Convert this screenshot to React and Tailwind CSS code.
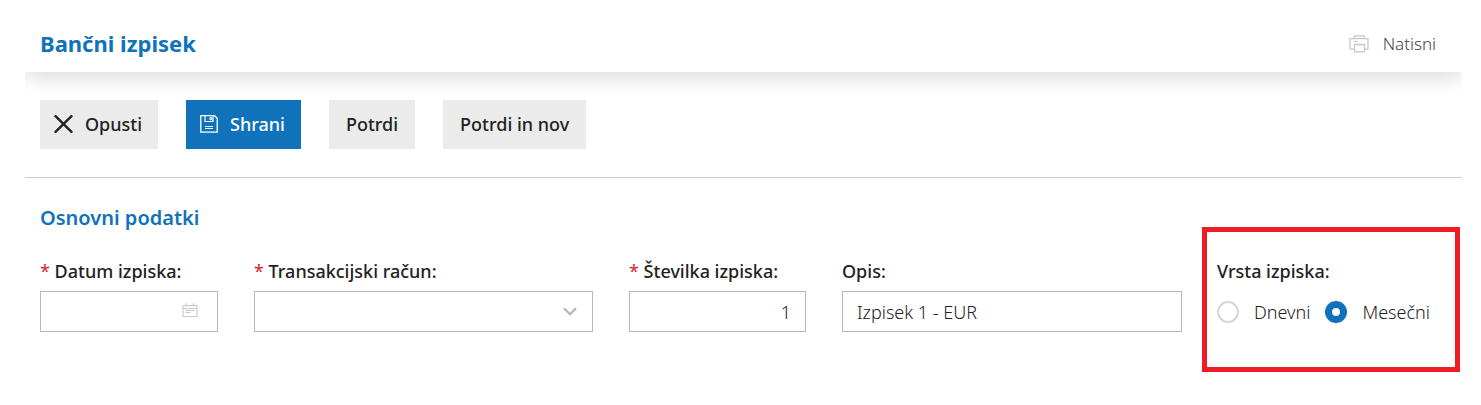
import { useState } from "react";

function CloseIcon() {
  return (
    <svg width="19" height="18" viewBox="0 0 19 18" fill="none" stroke="#222" strokeWidth="2.4" strokeLinecap="round" aria-hidden="true">
      <path d="M1.5 1.2 17.5 16.8M17.5 1.2 1.5 16.8" />
    </svg>
  );
}

function SaveIcon() {
  return (
    <svg width="18" height="18" viewBox="0 0 18 18" fill="none" stroke="#fff" aria-hidden="true">
      <path d="M.8.7V17.2H17.2V3.2L14.7.7Z" strokeWidth="1.3" />
      <path d="M5 1V6.5H13V1" strokeWidth="1.2" />
      <path d="M10 2.5H11.5V4.8H10Z" strokeWidth="1" />
      <path d="M5 11.5H13M5 13.5H13" strokeWidth="1" />
    </svg>
  );
}

function PrintIcon() {
  return (
    <svg width="20" height="18" viewBox="0 0 20 18" fill="none" stroke="#c8c8c8" strokeWidth="1.3" aria-hidden="true">
      <path d="M5.5 3.5V.8H15.5V3.5" />
      <path d="M5 14.2H1V3.6H19V14.2H16" />
      <path d="M5.5 9.5H15.5V16.8H5.5Z" />
      <path d="M5 6.5H8.5" />
    </svg>
  );
}

function CalendarIcon() {
  return (
    <svg width="16" height="15" viewBox="0 0 16 15" fill="none" stroke="#c8c8c8" aria-hidden="true">
      <path d="M1 2.5H15V13.5H1ZM1 5.5H15M4.5 .3V3.6M11.5 .3V3.6M3.5 7.5H12.5M3.5 9.5H8.5" strokeWidth="1.1" />
    </svg>
  );
}

function ChevronIcon() {
  return (
    <svg width="14" height="9" viewBox="0 0 14 9" fill="none" stroke="#b4b4b4" strokeWidth="2.2" aria-hidden="true">
      <path d="M1 1.2 7 7.2 13 1.2" />
    </svg>
  );
}

function Label({ htmlFor, required, children }) {
  return (
    <label htmlFor={htmlFor} className="block text-lg leading-6 font-medium whitespace-nowrap">
      {required && <span className="font-normal text-[#d9232e]">* </span>}
      {children}
    </label>
  );
}

const control =
  "h-[41px] w-full appearance-none rounded-none border border-[#b9b9b9] bg-white px-3.5 text-lg font-light outline-none focus:border-[#0f72ba]";
const button = "flex h-[49px] items-center pb-0.5 text-lg font-medium";
const radio =
  "size-[22px] shrink-0 appearance-none rounded-full border-2 border-[#d6d6d6] bg-white checked:border-[7px] checked:border-[#0f72ba]";

export default function App() {
  const [date, setDate] = useState("");
  const [number, setNumber] = useState("1");
  const [description, setDescription] = useState("Izpisek 1 - EUR");
  const [kind, setKind] = useState("monthly");

  return (
    <main className="bg-white pr-[19px] pb-8 pl-[25px] font-['Noto_Sans','Open_Sans',sans-serif] text-[#222]">
      <header className="flex h-[72px] items-center justify-between pt-[15px] pr-[26px] pl-[15px] shadow-[0_6px_20px_rgba(0,0,0,0.14)] [clip-path:inset(0_0_-28px_0)]">
        <h1 className="text-[22px] font-bold text-[#0f72ba]">Bančni izpisek</h1>
        <button type="button" className="flex items-center gap-3.5 text-[17px] font-light text-[#444]">
          <PrintIcon />
          Natisni
        </button>
      </header>

      <div className="flex flex-wrap gap-7 border-b border-[#cfcfcf] py-7 pl-[15px]">
        <button type="button" className={`${button} gap-3 bg-[#ebebeb] pr-4 pl-3.5`}>
          <CloseIcon />
          Opusti
        </button>
        <button type="button" className={`${button} gap-3 bg-[#0f72ba] pr-4 pl-3.5 text-white`}>
          <SaveIcon />
          Shrani
        </button>
        <button type="button" className={`${button} bg-[#ebebeb] px-[17px]`}>Potrdi</button>
        <button type="button" className={`${button} bg-[#ebebeb] px-[17px]`}>Potrdi in nov</button>
      </div>

      <form className="flex items-start gap-5 pr-0.5 pl-[15px]">
        <div className="min-w-0 grow pt-7">
          <h2 className="text-xl leading-6 font-semibold text-[#0f72ba]">Osnovni podatki</h2>
          <div className="mt-[29px] grid grid-cols-[178fr_339fr_177fr_340fr] gap-9">
            <div className="grid min-w-0 gap-2">
              <Label htmlFor="date" required>Datum izpiska:</Label>
              <div className="grid items-center">
                <input id="date" value={date} onChange={(e) => setDate(e.target.value)} className={`${control} col-start-1 row-start-1`} />
                <span className="pointer-events-none col-start-1 row-start-1 mr-5 justify-self-end pb-0.5">
                  <CalendarIcon />
                </span>
              </div>
            </div>
            <div className="grid min-w-0 gap-2">
              <Label htmlFor="account" required>Transakcijski račun:</Label>
              <div className="grid items-center">
                <select id="account" className={`${control} col-start-1 row-start-1`}>
                  <option value=""></option>
                </select>
                <span className="pointer-events-none col-start-1 row-start-1 mr-4 justify-self-end">
                  <ChevronIcon />
                </span>
              </div>
            </div>
            <div className="grid min-w-0 gap-2">
              <Label htmlFor="number" required>Številka izpiska:</Label>
              <input id="number" value={number} onChange={(e) => setNumber(e.target.value)} className={`${control} text-right`} />
            </div>
            <div className="grid min-w-0 gap-2">
              <Label htmlFor="description">Opis:</Label>
              <input id="description" value={description} onChange={(e) => setDescription(e.target.value)} className={control} />
            </div>
          </div>
        </div>

        <fieldset className="mt-[49px] w-[258px] shrink-0 border-5 border-[#ee1c25] px-2.5 pt-[27px] pb-[43px]">
          <legend className="float-left text-lg leading-6 font-medium">Vrsta izpiska:</legend>
          <div className="clear-both flex gap-[15px] pt-[17px] text-lg leading-6 font-light">
            <label className="flex items-center gap-[15px]">
              <input type="radio" name="kind" checked={kind === "daily"} onChange={() => setKind("daily")} className={radio} />
              Dnevni
            </label>
            <label className="flex items-center gap-[15px]">
              <input type="radio" name="kind" checked={kind === "monthly"} onChange={() => setKind("monthly")} className={radio} />
              Mesečni
            </label>
          </div>
        </fieldset>
      </form>
    </main>
  );
}
